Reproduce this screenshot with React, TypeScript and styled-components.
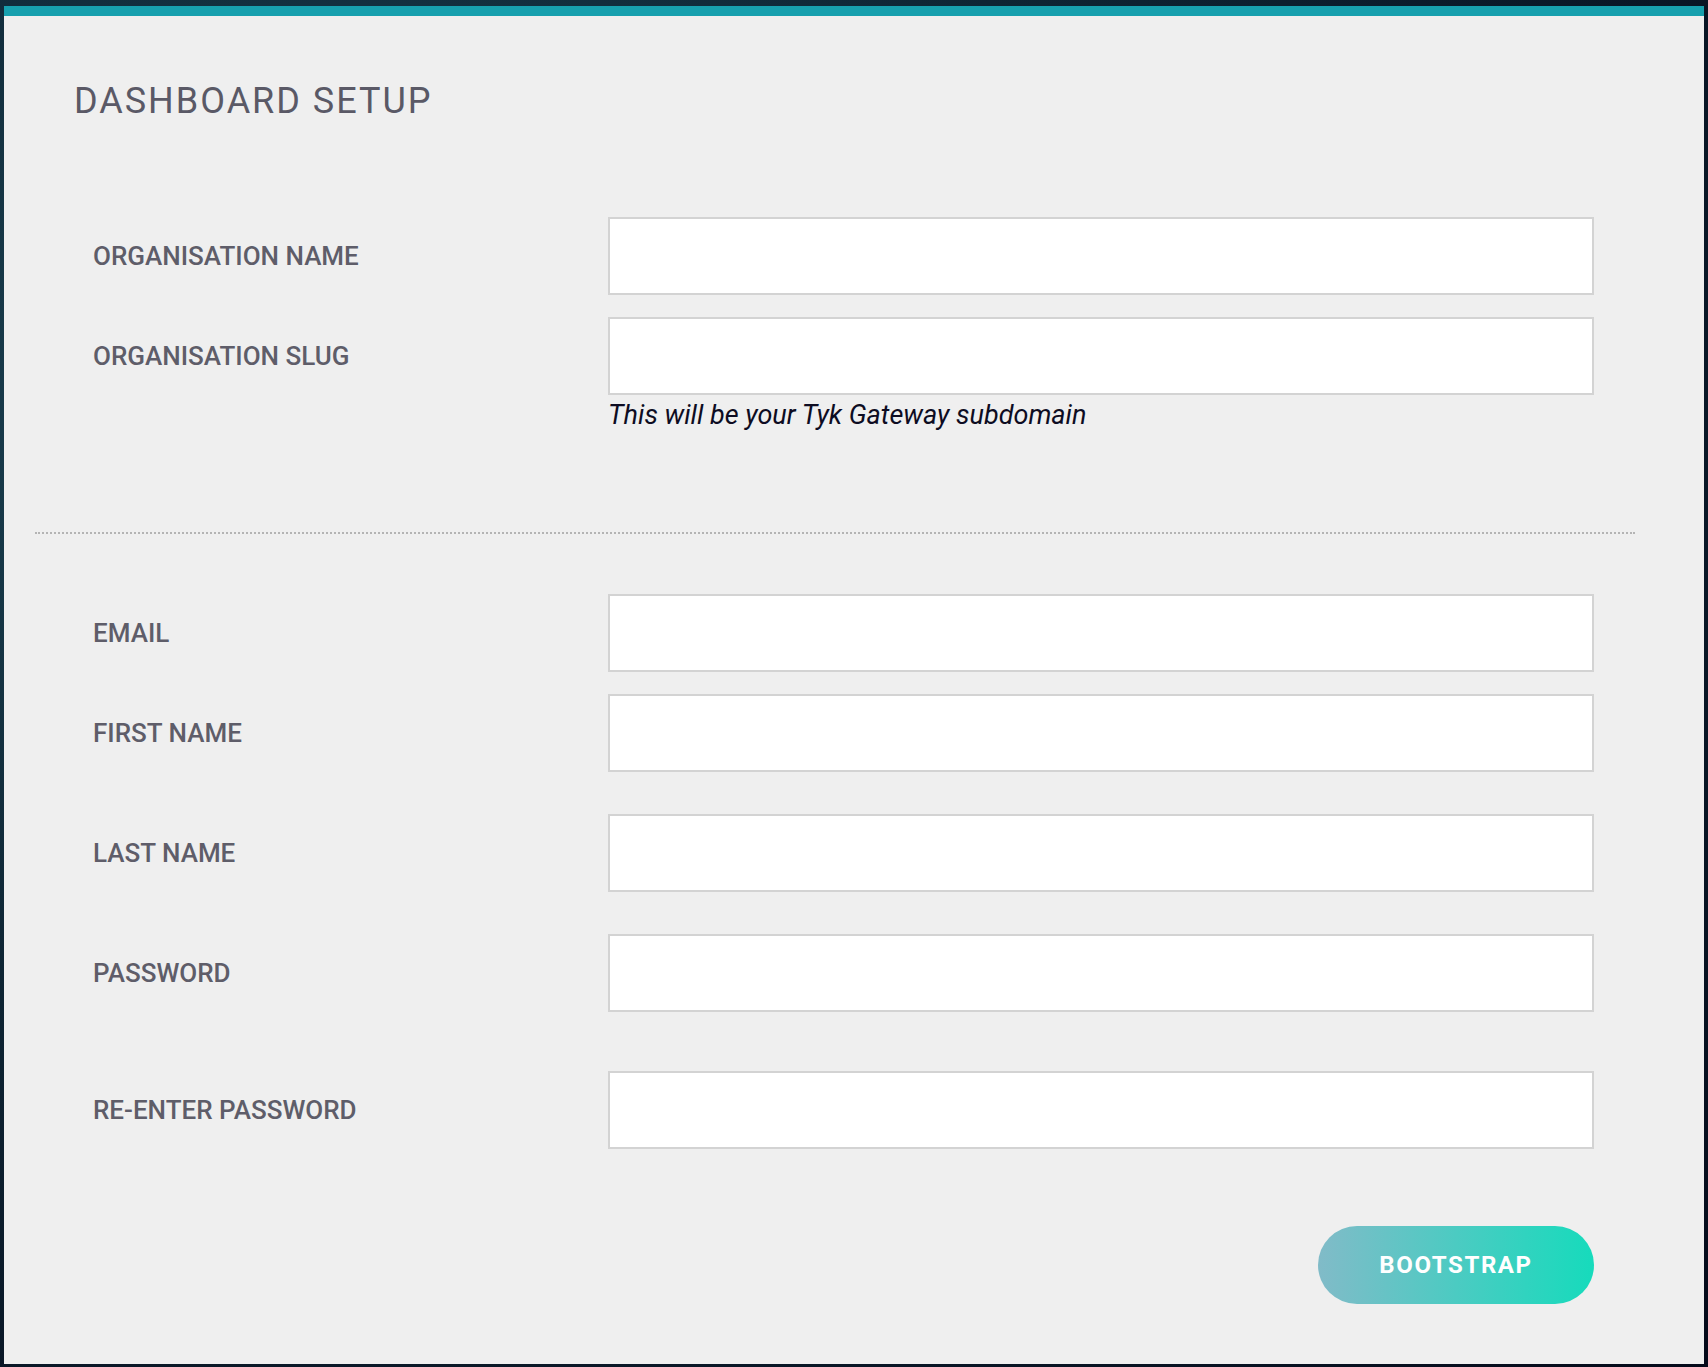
import React from "react";
import styled, { createGlobalStyle } from "styled-components";

const GlobalStyle = createGlobalStyle`
	html, body {
		margin: 0;
		padding: 0;
	}

	body {
		background: radial-gradient(ellipse at 20% 30%, #1d4656 0%, #0e2534 45%, #050a1a 100%);
		font-family: Roboto, "Liberation Sans", Arial, sans-serif;
		min-height: 1367px;
	}
`;

const Page = styled.div`
	padding: 6px 4px 3px 4px;
`;

const Panel = styled.section`
	background-color: #efefef;
	border-top: 10px solid #17a0ae;
	padding: 64px 0 60px 0;
	display: flex;
	flex-direction: column;
`;

const Title = styled.h1`
	margin: 0 0 95px 70px;
	font-size: 36px;
	line-height: 42px;
	font-weight: 400;
	letter-spacing: 2px;
	color: #5a5966;
`;

const Section = styled.div`
	display: flex;
	flex-direction: column;
	padding-left: 89px;
`;

const Row = styled.div<{ $spacing?: number }>`
	display: grid;
	grid-template-columns: 515px 986px;
	align-items: center;
	margin-top: ${(p) => p.$spacing ?? 0}px;
`;

const Label = styled.label`
	font-size: 26px;
	line-height: 30px;
	font-weight: 500;
	color: #5e5d69;
`;

const Input = styled.input`
	box-sizing: border-box;
	height: 78px;
	width: 100%;
	background: #fff;
	border: 2px solid #d3d3d3;
	border-radius: 0;
	outline: none;
	padding: 0 18px;
	font-size: 24px;
	font-family: inherit;
`;

const HelpText = styled.div`
	margin-top: 5px;
	font-size: 27px;
	line-height: 30px;
	font-style: italic;
	color: #0d0c22;
`;

const Divider = styled.hr`
	margin: 102px 69px 0 31px;
	border: none;
	border-top: 2px dotted #b4b4b4;
	height: 0;
`;

const Actions = styled.div`
	display: flex;
	justify-content: flex-end;
	margin: 77px 110px 0 0;
`;

const Button = styled.button`
	width: 276px;
	height: 78px;
	border: none;
	border-radius: 39px;
	background: linear-gradient(90deg, #81bbc8 0%, #16dbbc 100%);
	color: #fff;
	font-family: inherit;
	font-size: 24px;
	font-weight: 700;
	letter-spacing: 1.6px;
	cursor: pointer;
`;

const App: React.FC = () => {
	return (
		<Page>
			<GlobalStyle />
			<Panel>
				<Title>DASHBOARD SETUP</Title>

				<Section>
					<Row>
						<Label>ORGANISATION NAME</Label>
						<Input type="text" />
					</Row>
					<Row $spacing={22}>
						<Label>ORGANISATION SLUG</Label>
						<Input type="text" />
					</Row>
					<Row>
						<span />
						<HelpText>This will be your Tyk Gateway subdomain</HelpText>
					</Row>
				</Section>

				<Divider />

				<Section>
					<Row $spacing={60}>
						<Label>EMAIL</Label>
						<Input type="email" />
					</Row>
					<Row $spacing={22}>
						<Label>FIRST NAME</Label>
						<Input type="text" />
					</Row>
					<Row $spacing={42}>
						<Label>LAST NAME</Label>
						<Input type="text" />
					</Row>
					<Row $spacing={42}>
						<Label>PASSWORD</Label>
						<Input type="password" />
					</Row>
					<Row $spacing={59}>
						<Label>RE-ENTER PASSWORD</Label>
						<Input type="password" />
					</Row>
				</Section>

				<Actions>
					<Button>BOOTSTRAP</Button>
				</Actions>
			</Panel>
		</Page>
	);
};

export default App;
